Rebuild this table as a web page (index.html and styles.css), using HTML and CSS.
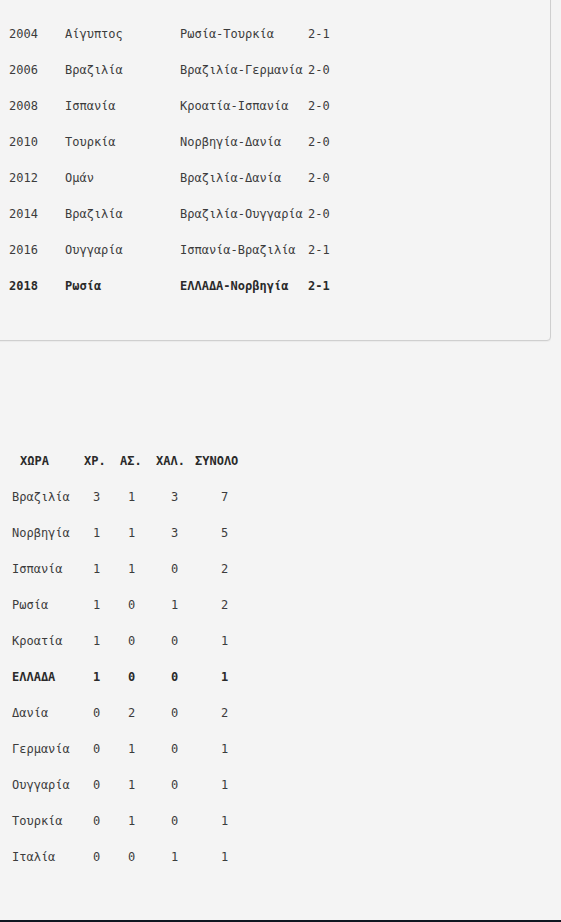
FILE: index.html
```html
<!DOCTYPE html>
<html lang="el">
<head>
<meta charset="utf-8">
<title>Αποτελέσματα</title>
<link rel="stylesheet" href="styles.css">
</head>
<body>
<div class="card">
  <div class="finals">
    <span>2004</span><span>Αίγυπτος</span><span>Ρωσία-Τουρκία</span><span>2-1</span>
    <span>2006</span><span>Βραζιλία</span><span>Βραζιλία-Γερμανία</span><span>2-0</span>
    <span>2008</span><span>Ισπανία</span><span>Κροατία-Ισπανία</span><span>2-0</span>
    <span>2010</span><span>Τουρκία</span><span>Νορβηγία-Δανία</span><span>2-0</span>
    <span>2012</span><span>Ομάν</span><span>Βραζιλία-Δανία</span><span>2-0</span>
    <span>2014</span><span>Βραζιλία</span><span>Βραζιλία-Ουγγαρία</span><span>2-0</span>
    <span>2016</span><span>Ουγγαρία</span><span>Ισπανία-Βραζιλία</span><span>2-1</span>
    <span class="b">2018</span><span class="b">Ρωσία</span><span class="b">ΕΛΛΑΔΑ-Νορβηγία</span><span class="b">2-1</span>
  </div>
</div>

<div class="medals">
  <span class="h h1">ΧΩΡΑ</span><span class="h">ΧΡ.</span><span class="h">ΑΣ.</span><span class="h">ΧΑΛ.</span><span class="h">ΣΥΝΟΛΟ</span>
  <span>Βραζιλία</span><span class="n2">3</span><span class="n3">1</span><span class="n4">3</span><span class="n5">7</span>
  <span>Νορβηγία</span><span class="n2">1</span><span class="n3">1</span><span class="n4">3</span><span class="n5">5</span>
  <span>Ισπανία</span><span class="n2">1</span><span class="n3">1</span><span class="n4">0</span><span class="n5">2</span>
  <span>Ρωσία</span><span class="n2">1</span><span class="n3">0</span><span class="n4">1</span><span class="n5">2</span>
  <span>Κροατία</span><span class="n2">1</span><span class="n3">0</span><span class="n4">0</span><span class="n5">1</span>
  <span class="b">ΕΛΛΑΔΑ</span><span class="n2 b">1</span><span class="n3 b">0</span><span class="n4 b">0</span><span class="n5 b">1</span>
  <span>Δανία</span><span class="n2">0</span><span class="n3">2</span><span class="n4">0</span><span class="n5">2</span>
  <span>Γερμανία</span><span class="n2">0</span><span class="n3">1</span><span class="n4">0</span><span class="n5">1</span>
  <span>Ουγγαρία</span><span class="n2">0</span><span class="n3">1</span><span class="n4">0</span><span class="n5">1</span>
  <span>Τουρκία</span><span class="n2">0</span><span class="n3">1</span><span class="n4">0</span><span class="n5">1</span>
  <span>Ιταλία</span><span class="n2">0</span><span class="n3">0</span><span class="n4">1</span><span class="n5">1</span>
</div>

<div class="bar"></div>
</body>
</html>
```
FILE: styles.css
```css
html, body {
  margin: 0;
  padding: 0;
  background: #f4f4f4;
}
body {
  font-family: "DejaVu Sans Mono", "Liberation Mono", monospace;
  font-size: 12px;
  color: #3c3c3c;
  height: 922px;
  overflow: hidden;
}
.card {
  margin: -12px 10px 0 -12px;
  padding: 27px 0 36px 20px;
  border: 1px solid #cfcfcf;
  border-radius: 4px;
  background: #f4f4f4;
  box-shadow: 0 1px 1px rgba(0,0,0,0.04);
}
.finals {
  display: grid;
  grid-template-columns: 56px 115px 128px auto;
  grid-auto-rows: 36px;
  align-items: center;
}
.b {
  font-weight: bold;
  color: #2a2a2a;
}
.medals {
  margin: 102px 0 0 12px;
  display: grid;
  grid-template-columns: 72px 36px 36px 39px 60px;
  grid-auto-rows: 36px;
  align-items: center;
}
.h {
  font-weight: bold;
  color: #2a2a2a;
}
.h1 { padding-left: 8px; }
.n2 { padding-left: 9px; }
.n3 { padding-left: 8px; }
.n4 { padding-left: 15px; }
.n5 { padding-left: 26px; }
.bar {
  margin-top: 45px;
  height: 2px;
  background: #0f1620;
}
```
